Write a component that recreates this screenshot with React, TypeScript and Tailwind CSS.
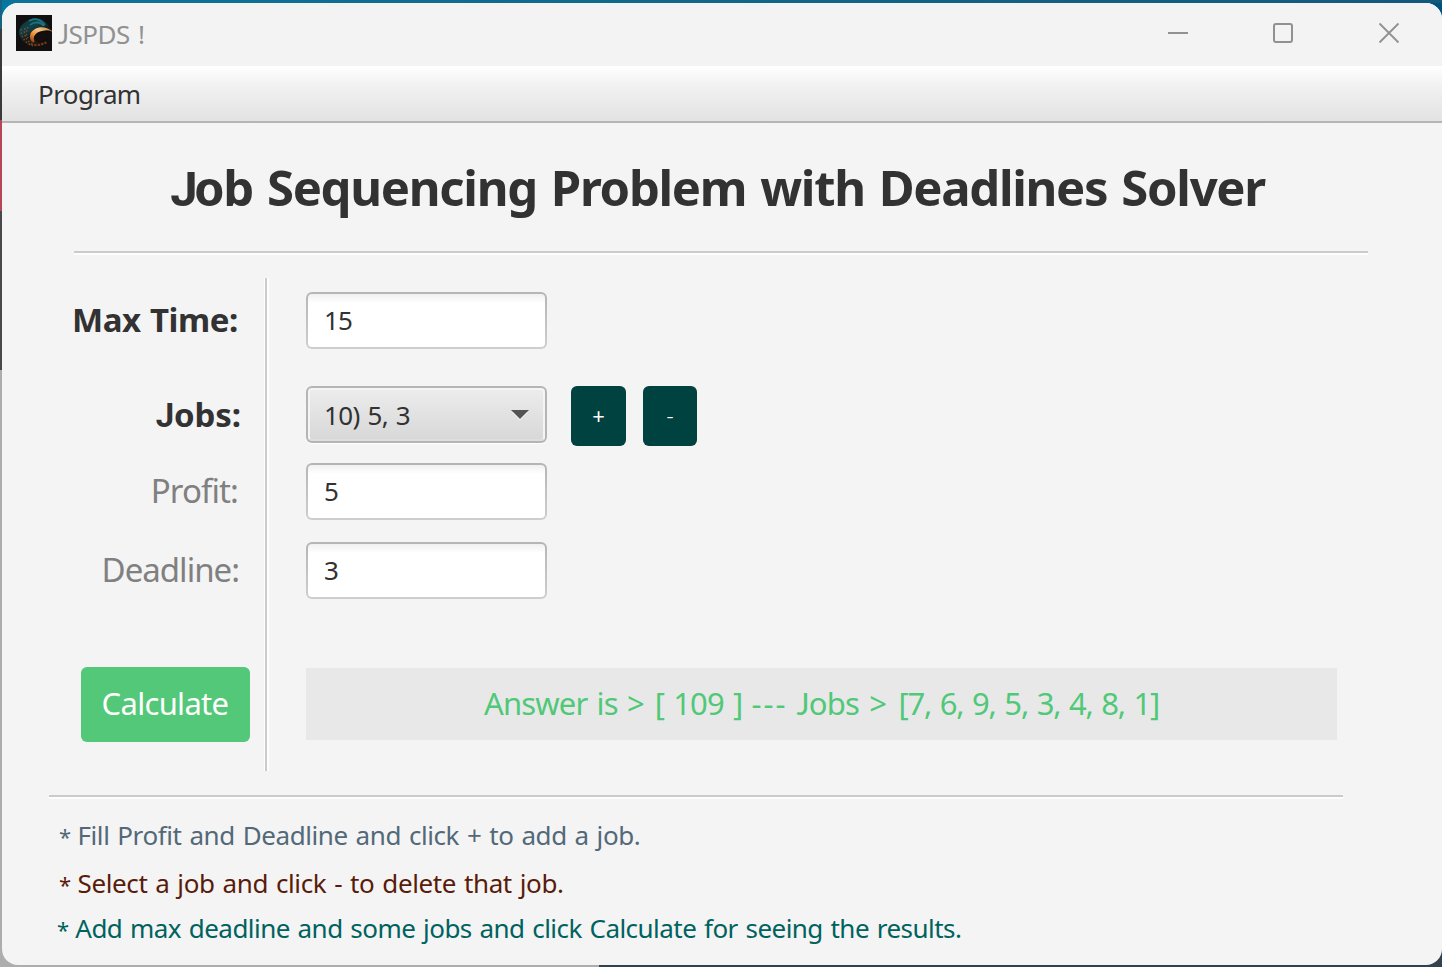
import type { ReactNode } from 'react';

function AppIcon() {
  return (
    <svg className="h-9 w-9" viewBox="0 0 36 36">
      <defs>
        <linearGradient id="feather" x1="0" y1="0" x2="0.6" y2="1">
          <stop offset="0" stopColor="#0b3036" />
          <stop offset="0.4" stopColor="#10424a" />
          <stop offset="0.65" stopColor="#161b1b" />
          <stop offset="1" stopColor="#2a1810" />
        </linearGradient>
        <linearGradient id="flame" x1="0" y1="1" x2="1" y2="0">
          <stop offset="0" stopColor="#7d3214" />
          <stop offset="0.35" stopColor="#ee9038" />
          <stop offset="0.6" stopColor="#f6c488" />
          <stop offset="1" stopColor="#b8863f" />
        </linearGradient>
        <filter id="soft"><feGaussianBlur stdDeviation="0.5" /></filter>
      </defs>
      <rect width="36" height="36" fill="#120f10" />
      <g filter="url(#soft)">
        <path d="M3 16C4 10 11 4 19 3C27 3 32 9 35 15C29 12 22 13 19 17C16 21 18 26 23 28L31 26C28 31 23 32 17 31C9 31 3 24 3 16Z" fill="url(#feather)" />
        <path d="M13 6C18 3 24 4 29 10M14 10C19 6 24 7 28 11" fill="none" stroke="#1f7480" strokeWidth="1.6" />
        <path d="M5 14C5 22 9 28 17 31M9 13C7 20 11 26 16 29M12 12C10 16 10 20 12 23" fill="none" stroke="#8a4a22" strokeWidth="1.3" strokeDasharray="1.5 2" />
        <path d="M15 29C20 31 26 30 31 27" fill="none" stroke="#7a3818" strokeWidth="2" strokeDasharray="2 1.5" />
        <path d="M36 16C31 12 24 11 19 14C14 17 12 22 16 27C18 28 19 27 18 25C17 21 20 17 26 16C30 15 33 15 36 16.500Z" fill="url(#flame)" />
        <path d="M34 17C30 16 23 17 20 20C18 23 21 27 25 27L32 25C29 23 29 19 34 17Z" fill="#120a0b" />
      </g>
    </svg>
  );
}

function HSeparator({ className }: { className: string }) {
  return (
    <div className={`flex h-1 shrink-0 flex-col ${className}`}>
      <div className="h-0.5 bg-[#cbcbcb]" />
      <div className="h-0.5 bg-[#fdfdfd]" />
    </div>
  );
}

function Field({ value, className = '' }: { value: string; className?: string }) {
  return (
    <div className={`h-[57px] w-[241px] shrink-0 rounded-[6px] bg-linear-to-b from-[#b5b5b5] to-[#cecece] p-0.5 ${className}`}>
      <div className="flex h-full items-center rounded-[4px] bg-linear-to-b from-[#f0f0f0] to-white to-[9px] pl-4 text-[26px] tracking-[-0.8px] text-[#323232]">
        {value}
      </div>
    </div>
  );
}

function Label({ children, className }: { children: ReactNode; className: string }) {
  return (
    <div className={`flex h-[57px] shrink-0 items-center justify-end pb-0.5 whitespace-nowrap ${className}`}>
      <span>{children}</span>
    </div>
  );
}

export default function App() {
  return (
    <div className="flex h-[967px] w-[1442px] overflow-hidden bg-linear-to-r from-[#0079a8] to-[#00527c] font-['Noto_Sans','Open_Sans',sans-serif]">
      <div className="flex w-0.5 shrink-0 flex-col">
        <div className="h-[29px] bg-[#176480]" />
        <div className="h-[91px] bg-[#3a3a3c]" />
        <div className="h-[91px] bg-[#b84557]" />
        <div className="h-[159px] bg-[#48484a]" />
        <div className="grow bg-[#adadad]" />
      </div>
      <div className="flex w-[1440px] flex-col bg-[linear-gradient(to_right,#adadad_0_597px,#33414d_597px_1440px)] bg-[length:100%_16px] bg-bottom bg-no-repeat">
        <div className="h-[3px] shrink-0 bg-linear-to-r from-[#0c7499] to-[#14587c]" />
        <main className="flex h-[962px] shrink-0 flex-col overflow-hidden rounded-[16px] bg-[#f4f4f4]">
          <header className="flex h-[63px] shrink-0 items-center bg-[#f3f3f3] pb-[3px] pl-[14px]">
            <AppIcon />
            <span className="mt-0.5 ml-[6px] text-[26px] tracking-[-0.5px] text-[#919191] [word-spacing:2px]">
              <span className="font-['Lato'] leading-none">J</span>SPDS !
            </span>
            <div className="mr-[42px] ml-auto flex items-center gap-[84px]">
              <svg className="h-[22px] w-[22px]" viewBox="0 0 22 22" fill="none" stroke="#919191" strokeWidth="2"><path d="M2 11H22" /></svg>
              <svg className="h-[22px] w-[22px]" viewBox="0 0 22 22" fill="none" stroke="#919191" strokeWidth="2"><rect x="2" y="2" width="18" height="18" rx="2" /></svg>
              <svg className="h-[22px] w-[22px]" viewBox="0 0 22 22" fill="none" stroke="#919191" strokeWidth="1.8"><path d="M1.5 1.5L20.5 20.5M20.5 1.5L1.5 20.5" /></svg>
            </div>
          </header>
          <nav className="flex h-[57px] shrink-0 items-center border-b-2 border-[#b5b5b5] bg-linear-to-b from-white via-[#f0f0f0] via-40% to-[#e3e3e3] pt-[1px] pl-9 text-[26px] tracking-[-0.6px] text-[#323232]">
            Program
          </nav>
          <h1 className="flex h-[128px] shrink-0 items-center justify-center pt-0.5 pr-[9px] text-[49px] font-bold whitespace-nowrap tracking-[-1.3px] text-[#323232] [word-spacing:2.500px]">
            <span>
              <span className="font-['Roboto'] leading-none tracking-[-3.500px]">J</span>ob Sequencing Problem with Deadlines Solver
            </span>
          </h1>
          <HSeparator className="ml-[72px] w-[1294px]" />
          <div className="mt-[23px] flex h-[493px] shrink-0">
            <div className="flex w-[262px] flex-col pt-[14px]">
              <Label className="pr-[26px] text-[33px] font-bold tracking-[-0.4px] text-[#323232] [word-spacing:1px]">Max Time:</Label>
              <Label className="mt-[38px] pr-[23px] text-[33px] font-bold tracking-[-0.1px] text-[#323232]">
                <span className="font-['Roboto'] leading-none">J</span>obs:
              </Label>
              <Label className="mt-[19px] pr-[26px] text-[33px] tracking-[-0.9px] text-[#808080]">Profit:</Label>
              <Label className="mt-[22px] pr-[25px] text-[33px] tracking-[-1px] text-[#808080]">Deadline:</Label>
              <button className="mt-[68px] ml-[79px] h-[75px] w-[169px] shrink-0 rounded-[6px] bg-[#52c878] pr-2 pb-0.5 pl-[7px] text-[31px] tracking-[-0.7px] text-white">
                Calculate
              </button>
            </div>
            <div className="flex w-[5px] shrink-0">
              <div className="w-[1px] bg-[#fdfdfd]" />
              <div className="w-0.5 bg-[#cbcbcb]" />
              <div className="w-0.5 bg-[#fdfdfd]" />
            </div>
            <div className="flex flex-col pt-[14px] pl-[37px]">
              <Field value="15" />
              <div className="mt-[38px] flex h-[57px] shrink-0">
                <div className="-mt-[1px] h-[57px] w-[241px] rounded-[6px] bg-[#b5b5b5] p-0.5 shadow-[0_1px_0_#fff]">
                  <div className="flex h-[53px] items-center justify-between rounded-[4px] border-2 border-[#f4f4f4] border-b-[#dedede] bg-linear-to-b from-[#ececec] to-[#d8d8d8] pt-0.5 pr-[14px] pl-[14px] text-[26px] tracking-[-0.6px] text-[#323232] [word-spacing:1.500px]">
                    10) 5, 3
                    <svg className="mb-0.5 h-[11px] w-[18px]" viewBox="0 0 18 11"><path d="M1 3H17L9 11Z" fill="#fff" /><path d="M0 1H18L9 10Z" fill="#555" /></svg>
                  </div>
                </div>
                <button className="-mt-[1px] ml-6 h-[59.5px] w-[55px] rounded-[6px] bg-[#004240] text-[22px] text-white">+</button>
                <button className="-mt-[1px] ml-[17px] h-[59.5px] w-[54px] rounded-[6px] bg-[#004240] text-[22px] font-light text-white">-</button>
              </div>
              <Field value="5" className="mt-[19px]" />
              <Field value="3" className="mt-[22px]" />
              <div className="mt-[69px] flex h-[72px] w-[1031px] shrink-0 items-center justify-center bg-[#e8e8e8] pb-0.5 text-[31px] whitespace-nowrap tracking-[-0.8px] text-[#50c878] [word-spacing:1.800px]">
                <span>
                  Answer is <span className="tracking-[1px]">&gt;</span> [ 109 ] <span className="tracking-[2px]">---</span>{' '}
                  <span className="font-['Lato'] leading-none">J</span>obs <span className="ml-[1px] tracking-[2.500px]">&gt;</span>{' '}
                  <span className="tracking-[-1.2px]">[7, 6, 9, 5, 3, 4, 8, 1]</span>
                </span>
              </div>
            </div>
          </div>
          <HSeparator className="mt-6 ml-[47px] w-[1294px]" />
          <div className="flex flex-col pt-3 pl-[57px] text-[26px] whitespace-nowrap [word-spacing:1.500px]">
            <p className="h-12 leading-[48px] tracking-[-0.41px] text-[#536878]"><span className="text-[22px] leading-none tracking-[-1.5px]">*</span> Fill Profit and Deadline and click + to add a job.</p>
            <p className="h-[46px] leading-[48px] tracking-[-0.38px] text-[#591c0b]"><span className="text-[22px] leading-none tracking-[-1.5px]">*</span> Select a job and click - to delete that job.</p>
            <p className="-ml-0.5 h-[46px] leading-[46px] tracking-[-0.54px] text-[#00625f]"><span className="text-[22px] leading-none tracking-[-1.5px]">*</span> Add max deadline and some jobs and click Calculate for seeing the results.</p>
          </div>
        </main>
      </div>
    </div>
  );
}
